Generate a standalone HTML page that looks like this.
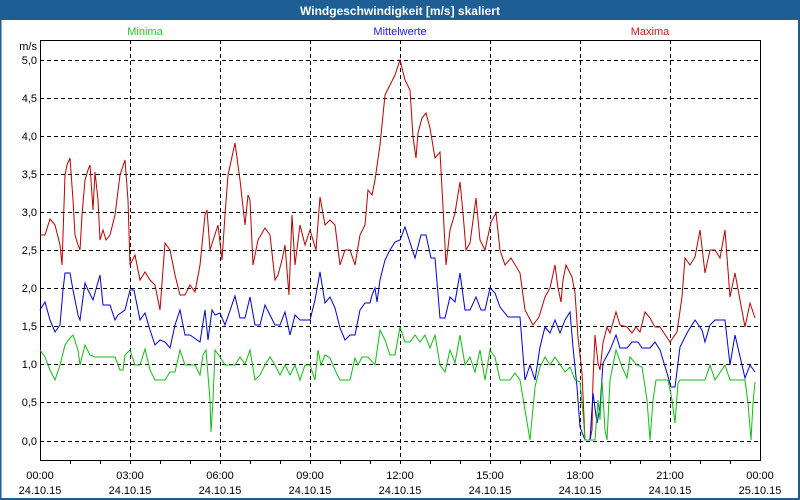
<!DOCTYPE html>
<html><head><meta charset="utf-8"><style>
html,body{margin:0;padding:0;}
body{width:800px;height:500px;overflow:hidden;background:#fdfefd;font-family:"Liberation Sans",sans-serif;}
</style></head><body>
<svg width="800" height="500" xmlns="http://www.w3.org/2000/svg" style="display:block">
<rect x="0" y="0" width="800" height="500" fill="#fdfefd"/>
<rect x="0" y="0" width="800" height="20" fill="#1d5f95"/>
<rect x="0" y="0" width="1.5" height="500" fill="#1d5f95"/>
<rect x="798" y="0" width="2" height="500" fill="#1d5f95"/>
<rect x="0" y="498" width="800" height="2" fill="#1d5f95"/>
<text x="400" y="15" fill="#fff" font-size="12" font-weight="bold" text-anchor="middle" font-family="Liberation Sans,sans-serif">Windgeschwindigkeit [m/s] skaliert</text>
<g font-size="11" font-family="Liberation Sans,sans-serif" text-anchor="middle">
<text x="145" y="35" fill="#22cc22">Minima</text>
<text x="400" y="35" fill="#1a1aff">Mittelwerte</text>
<text x="650" y="35" fill="#d01a1a">Maxima</text>
</g>
<g stroke="#000" stroke-width="1" stroke-dasharray="4,3" fill="none">
<path d="M40 60.5H760M40 98.5H760M40 136.5H760M40 174.5H760M40 212.5H760M40 250.5H760M40 288.5H760M40 326.5H760M40 364.5H760M40 402.5H760M40 441.5H760"/>
<path d="M130.5 40V460M220.5 40V460M310.5 40V460M400.5 40V460M490.5 40V460M580.5 40V460M670.5 40V460"/>
</g>
<rect x="40.5" y="40.5" width="720" height="420" fill="none" stroke="#000" stroke-width="1"/>
<path d="M70.5 460v4M100.5 460v4M130.5 460v4M160.5 460v4M190.5 460v4M220.5 460v4M250.5 460v4M280.5 460v4M310.5 460v4M340.5 460v4M370.5 460v4M400.5 460v4M430.5 460v4M460.5 460v4M490.5 460v4M520.5 460v4M550.5 460v4M580.5 460v4M610.5 460v4M640.5 460v4M670.5 460v4M700.5 460v4M730.5 460v4" stroke="#000"/>
<g font-size="11" font-family="Liberation Sans,sans-serif" fill="#000" text-anchor="end">
<text x="37" y="50">m/s</text>
<text x="37" y="64">5,0</text><text x="37" y="140">4,0</text><text x="37" y="102">4,5</text>
<text x="37" y="178">3,5</text><text x="37" y="216">3,0</text><text x="37" y="254">2,5</text>
<text x="37" y="292">2,0</text><text x="37" y="330">1,5</text><text x="37" y="368">1,0</text>
<text x="37" y="406">0,5</text><text x="37" y="445">0,0</text>
</g>
<g font-size="11" font-family="Liberation Sans,sans-serif" fill="#000" text-anchor="middle">
<text x="40" y="479">00:00</text><text x="40" y="494">24.10.15</text>
<text x="130" y="479">03:00</text><text x="130" y="494">24.10.15</text>
<text x="220" y="479">06:00</text><text x="220" y="494">24.10.15</text>
<text x="310" y="479">09:00</text><text x="310" y="494">24.10.15</text>
<text x="400" y="479">12:00</text><text x="400" y="494">24.10.15</text>
<text x="490" y="479">15:00</text><text x="490" y="494">24.10.15</text>
<text x="580" y="479">18:00</text><text x="580" y="494">24.10.15</text>
<text x="670" y="479">21:00</text><text x="670" y="494">24.10.15</text>
<text x="760" y="479">00:00</text><text x="760" y="494">25.10.15</text>
</g>
<g fill="none" stroke-width="1">
<polyline stroke="#c00000" points="40,235 45,235 50,219 55,225 60,245 62,265 65,175 67,165 70,158 73,200 75,235 78,245 80,250 82,215 85,180 88,170 90,165 93,210 95,172 98,200 100,240 103,230 106,240 110,235 115,215 120,175 125,160 128,200 130,265 135,255 140,280 145,272 150,280 155,285 160,310 165,243 170,250 175,275 180,295 185,295 190,285 195,292 200,265 205,215 207,210 210,250 218,225 222,260 225,215 228,175 235,143 240,180 245,225 248,195 250,200 253,265 258,240 265,228 270,235 275,280 278,275 282,260 285,245 289,295 292,215 295,265 300,225 305,245 310,230 316,250 320,197 325,225 330,220 335,225 340,265 345,250 350,250 355,265 360,235 365,225 368,190 372,195 375,180 380,145 385,95 390,85 395,75 400,60 405,80 410,90 413,137 416,158 418,133 422,118 426,113 430,128 435,158 440,152 443,207 446,265 450,230 455,213 460,182 463,213 466,250 470,243 476,198 480,240 485,250 491,222 496,213 500,250 505,265 511,258 520,273 525,310 533,325 539,317 545,297 550,288 555,265 558,288 561,302 563,280 566,265 572,277 575,293 578,337 582,373 585,440 590,440 592,430 593,380 595,335 598,363 600,370 603,343 607,327 610,333 616,312 620,325 627,327 632,333 636,327 640,332 645,312 650,318 655,327 660,327 670,342 677,332 682,297 685,258 690,265 695,257 700,230 705,273 710,250 715,250 720,258 725,230 730,297 735,273 745,327 750,303 755,318"/>
<polyline stroke="#0000e0" points="40,310 45,302 50,320 55,332 60,325 63,290 65,273 70,273 73,290 78,315 80,320 85,283 88,290 93,300 100,275 103,305 110,305 115,320 118,315 125,310 130,290 134,290 140,320 145,313 150,330 155,345 160,340 165,342 170,348 175,325 180,310 185,335 190,335 200,342 205,310 208,340 212,310 215,315 220,313 225,325 235,296 240,318 245,318 250,297 255,325 260,325 265,305 270,315 275,325 280,325 285,312 290,335 295,315 300,320 305,320 310,320 315,300 320,272 325,303 330,297 335,308 340,328 345,340 350,335 355,335 360,310 365,303 370,303 372,295 375,288 377,302 380,280 385,260 390,250 395,242 400,240 405,227 415,258 421,235 426,235 431,258 435,258 440,318 445,318 450,297 455,302 460,273 465,310 470,310 476,297 481,310 485,310 490,288 495,293 500,307 508,317 520,317 525,380 530,365 535,380 540,347 545,327 550,333 555,320 560,333 565,320 570,312 573,347 577,387 580,427 585,440 590,440 593,393 597,423 600,407 603,363 610,350 616,335 620,348 627,348 632,342 638,342 642,348 650,348 655,342 660,350 667,373 671,387 675,387 680,347 687,333 695,320 702,330 705,342 710,325 715,320 725,320 730,365 735,335 745,378 750,365 755,372"/>
<polyline stroke="#10c010" points="40,350 45,357 50,370 55,380 60,365 65,345 70,338 73,335 78,350 80,365 85,345 90,355 95,357 115,357 120,370 123,370 125,355 130,350 135,365 140,365 145,349 150,370 155,380 165,380 170,372 175,372 180,350 185,365 195,365 200,375 203,355 206,350 210,400 211,432 213,400 215,350 220,357 225,365 235,365 240,357 245,364 250,350 255,380 260,375 265,365 270,357 275,365 280,375 285,365 290,375 295,365 300,380 305,365 310,365 315,380 318,350 321,365 325,355 330,358 335,370 340,380 350,380 355,358 358,365 362,357 368,357 375,365 380,330 385,340 390,355 395,355 400,327 405,342 410,342 415,335 420,342 425,335 430,348 435,335 440,365 445,372 450,350 455,363 460,335 465,365 470,357 475,372 480,350 485,380 490,350 495,357 500,380 510,380 515,373 520,380 530,440 535,387 540,367 545,357 550,365 555,357 565,372 570,367 575,380 580,382 583,413 585,440 595,440 598,400 600,420 602,380 605,430 607,440 610,380 616,350 622,367 627,378 630,357 637,365 642,367 647,400 650,440 653,400 656,380 668,380 672,400 675,423 678,383 680,380 705,380 710,365 715,380 725,365 730,380 745,380 748,403 751,440 753,403 755,382"/>
</g>
</svg>
</body></html>
